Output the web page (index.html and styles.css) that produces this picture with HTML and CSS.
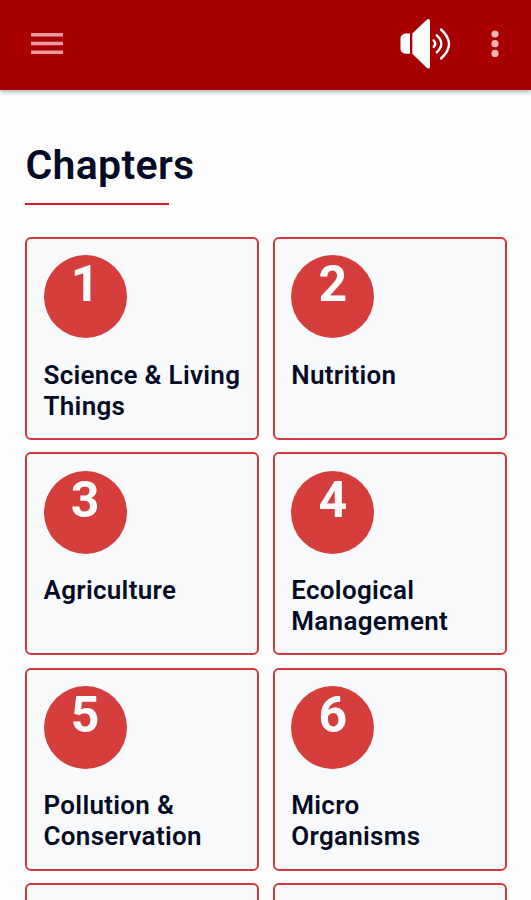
FILE: index.html
```html
<!DOCTYPE html>
<html lang="en">
<head>
    <meta charset="UTF-8">
    <meta name="viewport" content="width=device-width, initial-scale=1.0">
    <title>Chapters</title>
    <link rel="stylesheet" href="styles.css">
</head>
<body>
    <!-- Top bar -->
    <header class="topbar">
        <svg class="menu-icon" viewBox="0 0 34 24">
            <path d="M1 2.700h32M1 11.500h32M1 20.300h32"/>
        </svg>
        <div class="actions">
            <svg class="sound-icon" viewBox="0 0 54 52">
                <path class="solid" d="M5 15.500h5v20.200H5q-4.500-1-4.500-5V20.500q0-4 4.500-5z"/>
                <path class="solid" d="M12.300 15.500L27 1.500q3-1.500 3 1.500v45.500q0 3-3 1.500L12.300 35.700z"/>
                <path class="wave" d="M33.700 22.500q3 3.200 0 6.400M36.800 17.300q9 8.300 0 17M41 11.500q16 14.500 0 29"/>
            </svg>
            <svg class="more-icon" viewBox="0 0 10 30">
                <circle cx="5" cy="5" r="3.600"/>
                <circle cx="5" cy="14.700" r="3.600"/>
                <circle cx="5" cy="24.400" r="3.600"/>
            </svg>
        </div>
    </header>

    <main class="content">
        <h1>Chapters</h1>
        <div class="underline"></div>

        <!-- Chapter cards -->
        <div class="chapters">
            <div class="card">
                <div class="number">1</div>
                <div class="name">Science &amp; Living Things</div>
            </div>
            <div class="card">
                <div class="number">2</div>
                <div class="name">Nutrition</div>
            </div>
            <div class="card">
                <div class="number">3</div>
                <div class="name">Agriculture</div>
            </div>
            <div class="card">
                <div class="number">4</div>
                <div class="name">Ecological Management</div>
            </div>
            <div class="card">
                <div class="number">5</div>
                <div class="name">Pollution &amp; Conservation</div>
            </div>
            <div class="card">
                <div class="number">6</div>
                <div class="name">Micro<br>Organisms</div>
            </div>
            <div class="card"></div>
            <div class="card"></div>
        </div>
    </main>
</body>
</html>
```
FILE: styles.css
```css
* {
    box-sizing: border-box;
}
body {
    margin: 0;
    height: 900px;
    overflow: hidden;
    background: #fefefe;
    color: #050b24;
    font-family: Roboto, sans-serif;
}
.topbar {
    display: flex;
    justify-content: space-between;
    align-items: center;
    height: 90px;
    padding: 0 31px 3px 30px;
    background: #a80000;
    box-shadow: 0 2px 4px rgba(0, 0, 0, 0.3);
}
.actions {
    display: flex;
    align-items: center;
    gap: 36px;
}
.menu-icon {
    width: 34px;
    height: 24px;
    fill: none;
    stroke: #e99a9e;
    stroke-width: 3.6;
}
.sound-icon {
    width: 54px;
    height: 52px;
}
.solid {
    fill: #fff;
}
.wave {
    fill: none;
    stroke: #fff;
    stroke-width: 2.4;
    stroke-linecap: round;
}
.more-icon {
    width: 10px;
    height: 30px;
    fill: #f0b4b8;
}
.content {
    height: 810px;
    padding: 50px 24.500px 0 25px;
    overflow: hidden;
}
h1 {
    margin: 0;
    padding-left: 0.5px;
    font-size: 41px;
    font-weight: 600;
    line-height: 50px;
    letter-spacing: 0.3px;
}
.underline {
    width: 144px;
    height: 2px;
    margin: 12.500px 0 32.500px;
    background: #d21f26;
}
.chapters {
    display: grid;
    grid-template-columns: 1fr 1fr;
    grid-auto-rows: 203px;
    gap: 12.400px 14px;
}
.card {
    padding: 16.400px 10px 0 16.500px;
    background: #f9fafc;
    border: 2px solid #d4383c;
    border-radius: 6px;
}
.number {
    width: 83px;
    height: 83px;
    border-radius: 50%;
    background: #d63d3d;
    color: #fff;
    font-size: 50px;
    font-weight: 700;
    line-height: 58px;
    text-align: center;
}
.name {
    margin-top: 21.200px;
    font-size: 26px;
    font-weight: 600;
    line-height: 31px;
    letter-spacing: 0.3px;
}
```
